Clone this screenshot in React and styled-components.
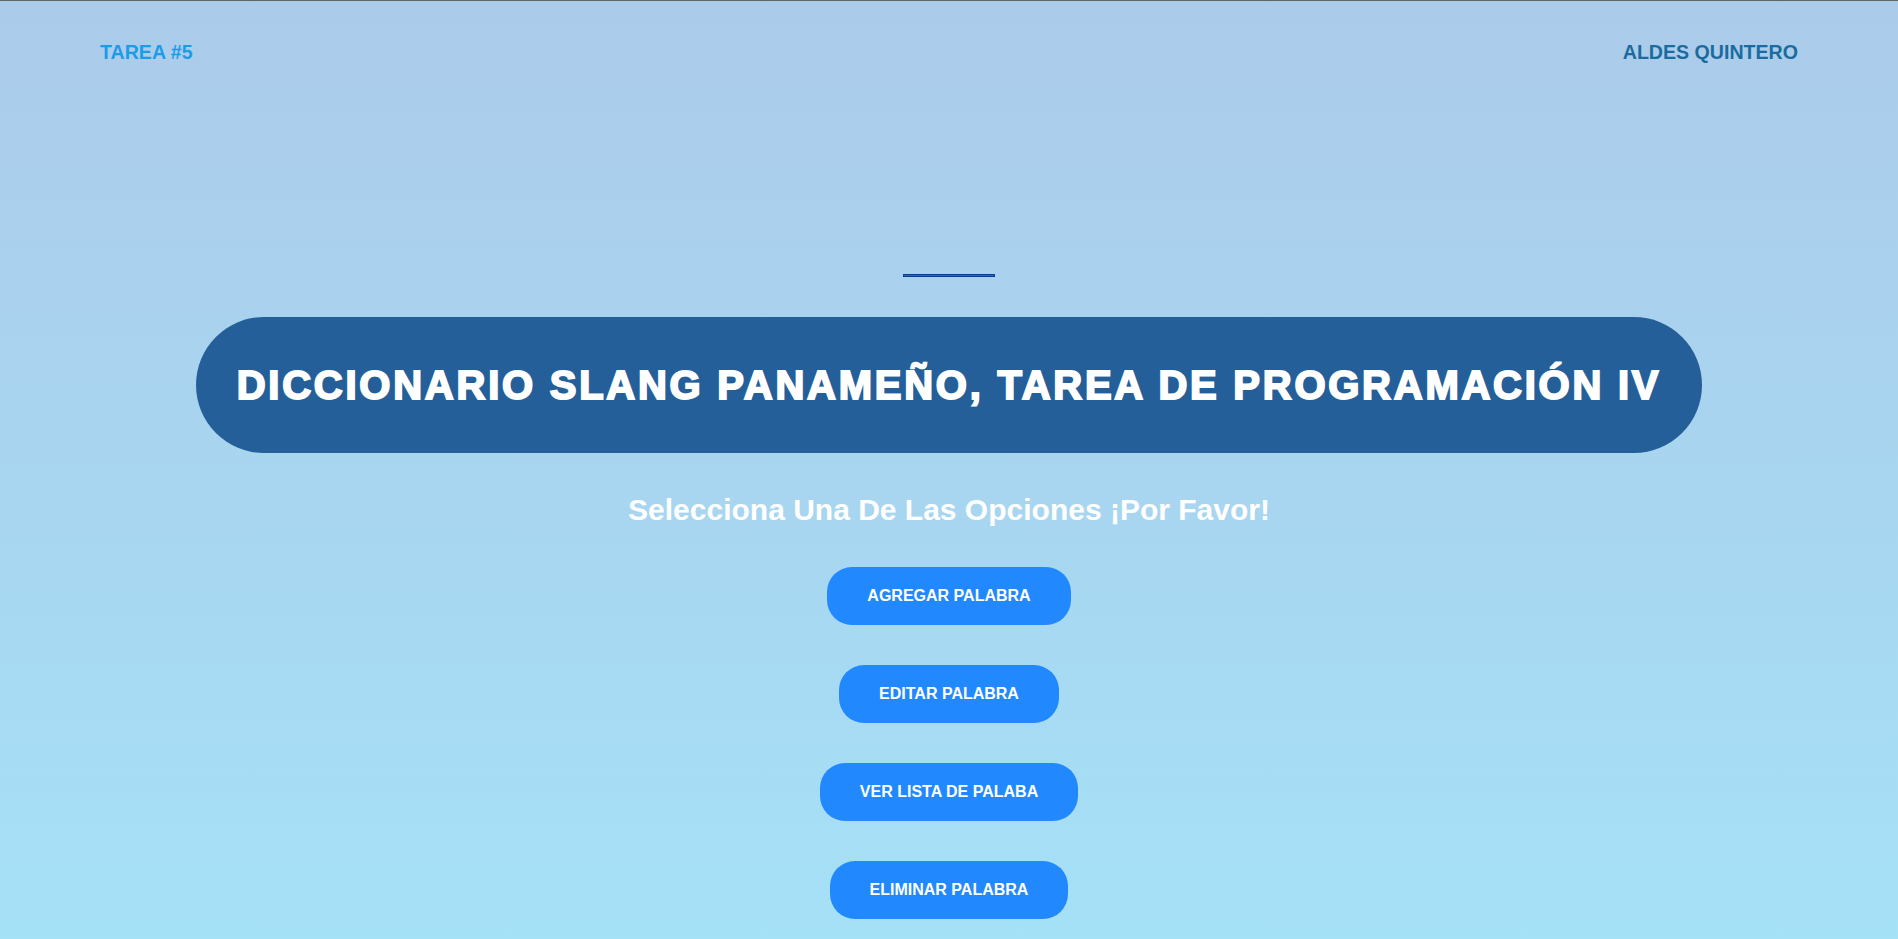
import React from "react";
import styled, { createGlobalStyle } from "styled-components";

const Global = createGlobalStyle`
  * { box-sizing: border-box; }
  html, body { margin: 0; padding: 0; }
  body {
    font-family: "Liberation Sans", Arial, sans-serif;
    background: #a6e0f6;
  }
`;

const Page = styled.div`
  min-height: 939px;
  height: 939px;
  overflow: hidden;
  border-top: 1px solid #646464;
  background: linear-gradient(180deg, #abcbea 0%, #a8d6f0 55%, #a5e1f7 100%);
  display: flex;
  flex-direction: column;
`;

const Header = styled.header`
  display: flex;
  justify-content: space-between;
  align-items: center;
  padding: 40px 100px 0;
`;

const HeaderText = styled.span`
  font-size: 19.6px;
  font-weight: 700;
  line-height: 22px;
  color: ${(p) => p.$color};
`;

const Main = styled.main`
  display: flex;
  flex-direction: column;
  align-items: center;
  gap: 40px;
  padding-top: 211px;
`;

const Rule = styled.div`
  width: 92px;
  height: 3px;
  border: 1px solid #0b3a8c;
  background: #2d68b4;
`;

const Title = styled.h1`
  margin: 0;
  padding: 45px 41px;
  background: #245f99;
  border-radius: 68px;
  color: #ffffff;
  font-size: 40px;
  line-height: 46px;
  font-weight: 700;
  letter-spacing: 2.75px;
  white-space: nowrap;
  -webkit-text-stroke: 1.9px #ffffff;
`;

const Subtitle = styled.h2`
  margin: 0;
  color: #ffffff;
  font-size: 30px;
  line-height: 34px;
  font-weight: 700;
`;

const Options = styled.div`
  display: flex;
  flex-direction: column;
  align-items: center;
  gap: 40px;
`;

const OptionButton = styled.button`
  appearance: none;
  border: none;
  cursor: pointer;
  background: #2288fe;
  color: #ffffff;
  font-family: "Liberation Sans", Arial, sans-serif;
  font-size: 16px;
  font-weight: 700;
  line-height: 18px;
  padding: 20px 40px;
  border-radius: 25px;
`;

const options = [
  "AGREGAR PALABRA",
  "EDITAR PALABRA",
  "VER LISTA DE PALABA",
  "ELIMINAR PALABRA",
];

export default function App() {
  return (
    <>
      <Global />
      <Page>
        <Header>
          <HeaderText $color="#1b9ce7">TAREA #5</HeaderText>
          <HeaderText $color="#1a6c9f">ALDES QUINTERO</HeaderText>
        </Header>
        <Main>
          <Rule />
          <Title>DICCIONARIO SLANG PANAMEÑO, TAREA DE PROGRAMACIÓN IV</Title>
          <Subtitle>Selecciona Una De Las Opciones ¡Por Favor!</Subtitle>
          <Options>
            {options.map((o) => (
              <OptionButton key={o}>{o}</OptionButton>
            ))}
          </Options>
        </Main>
      </Page>
    </>
  );
}
